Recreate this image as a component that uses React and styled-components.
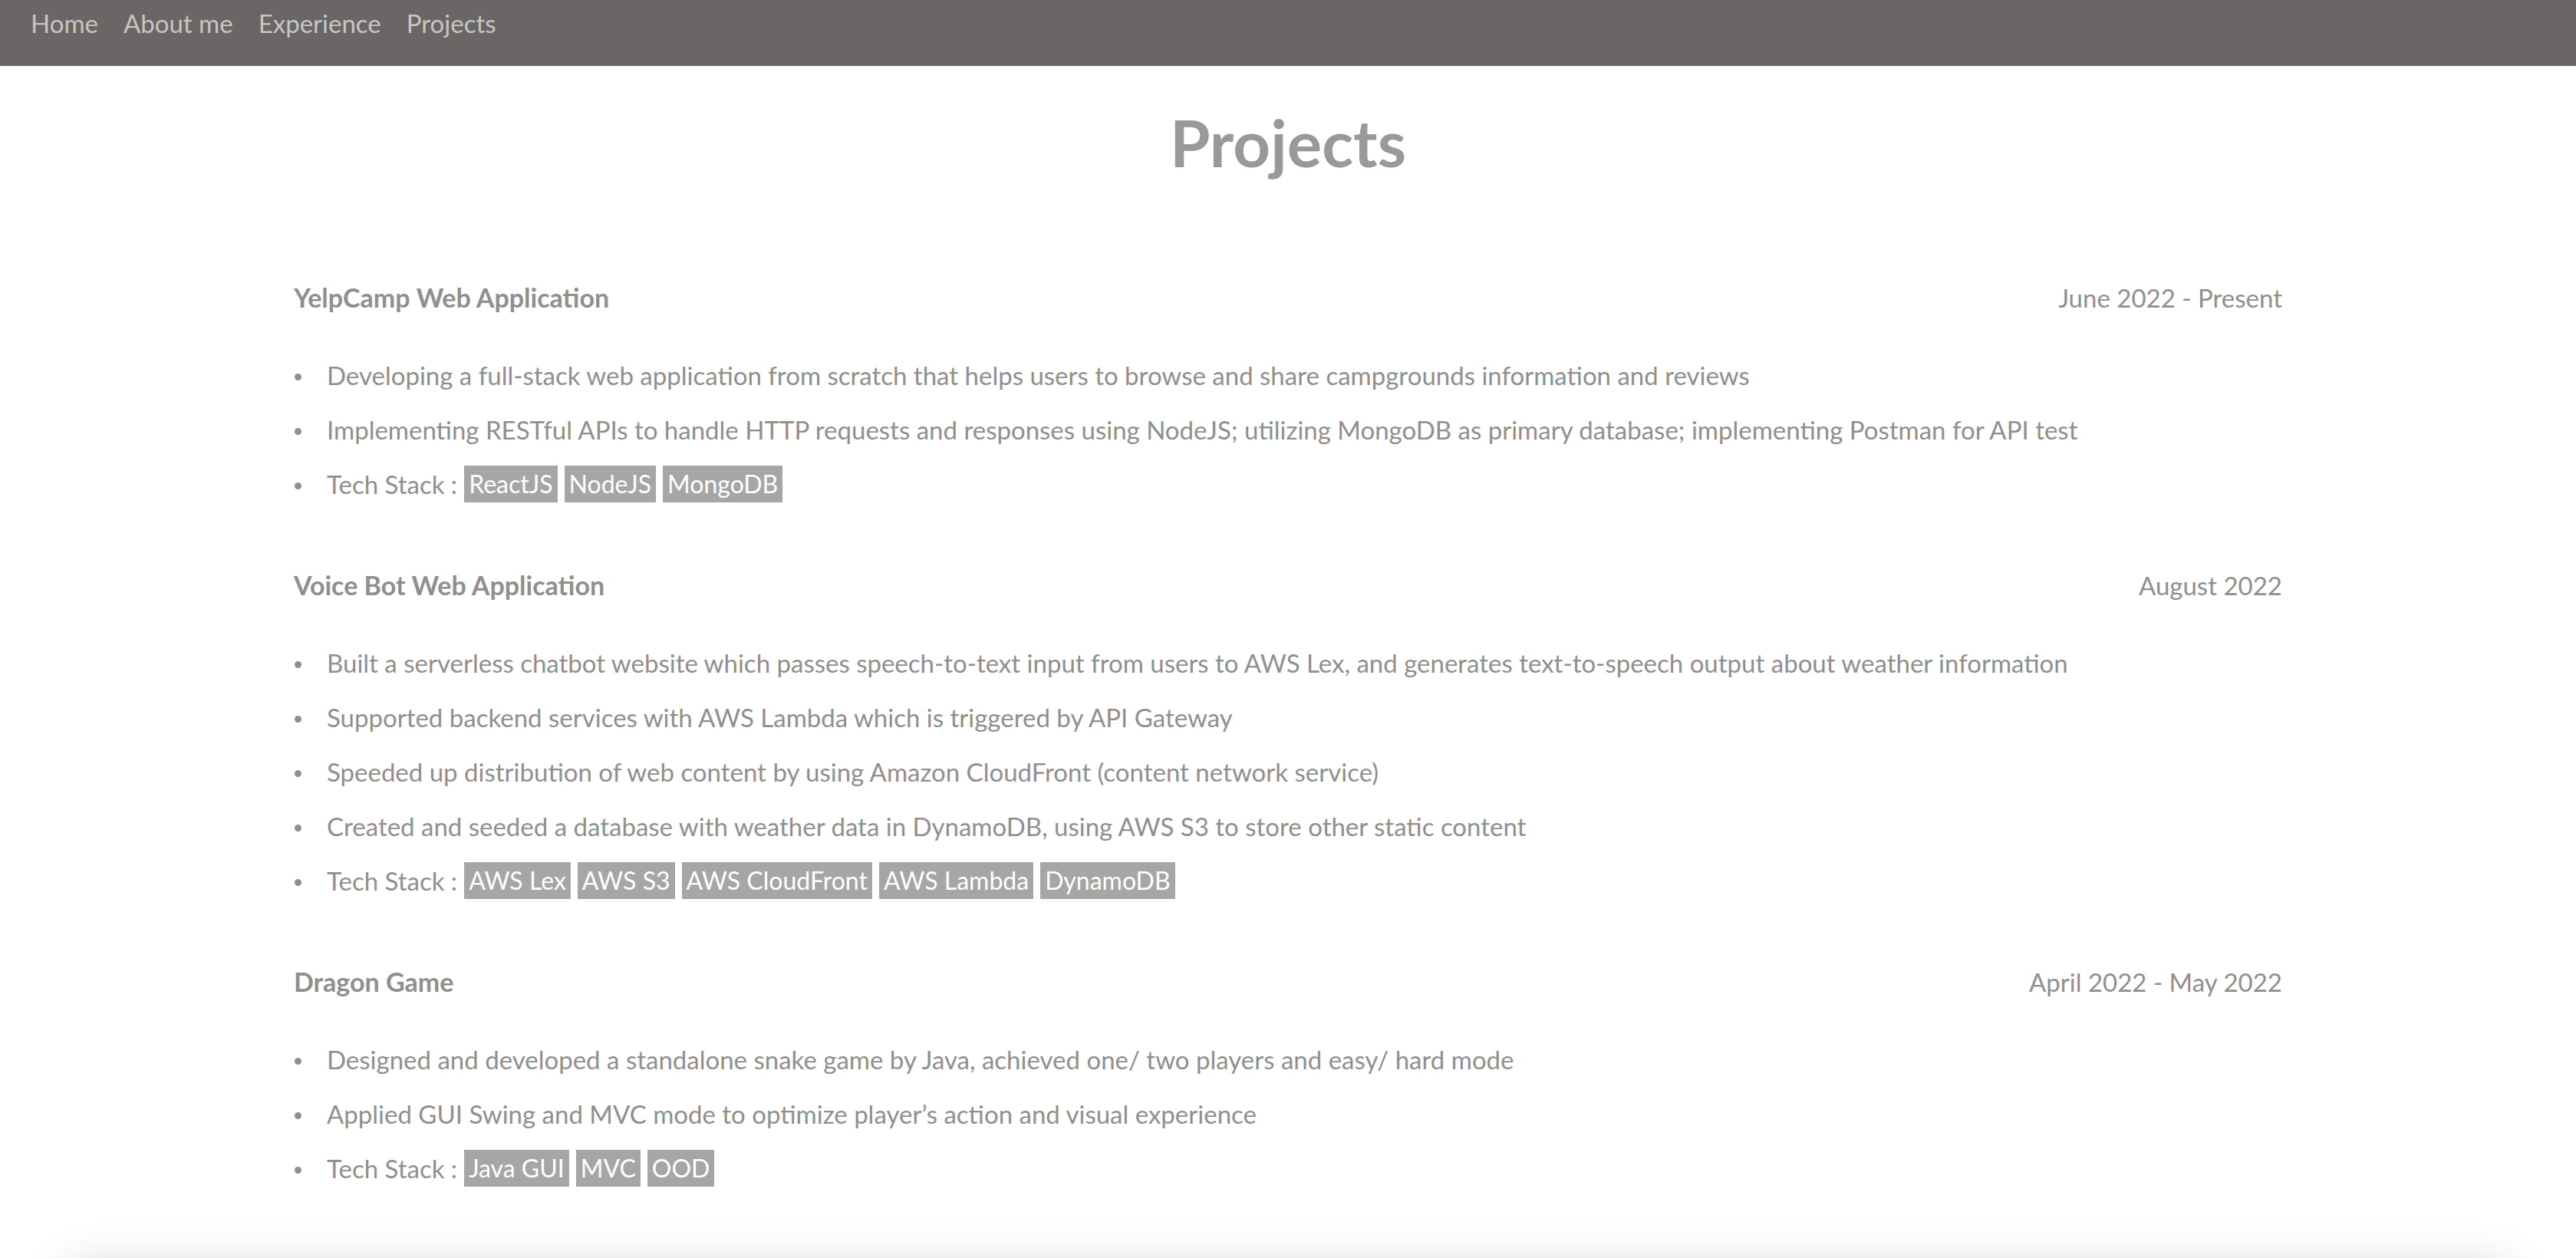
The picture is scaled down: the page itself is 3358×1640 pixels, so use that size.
import React from "react";
import styled, { createGlobalStyle } from "styled-components";

const Global = createGlobalStyle`
  html, body { margin: 0; padding: 0; background: #ffffff; }
  body { font-family: Lato, "Open Sans", sans-serif; }
  * { box-sizing: border-box; }
`;

const NavBar = styled.nav`
  height: 86px;
  background: #6b6666;
  display: flex;
  align-items: flex-start;
  gap: 33px;
  padding: 10px 0 0 40px;
`;

const NavLink = styled.a`
  font-size: 33px;
  line-height: 40px;
  color: #c8c4c4;
  text-decoration: none;
`;

const Title = styled.h1`
  margin: 51px 0 0;
  text-align: center;
  font-size: 85px;
  line-height: 96px;
  font-weight: 700;
  color: #999999;
`;

const Content = styled.main`
  width: 2592px;
  margin: 131px auto 0;
  display: flex;
  flex-direction: column;
  gap: 84px;
`;

const Project = styled.section`
  display: flex;
  flex-direction: column;
  gap: 53px;
`;

const Header = styled.div`
  display: flex;
  justify-content: space-between;
  align-items: center;
  font-size: 33px;
  line-height: 48px;
  color: #8f8f8f;
`;

const Name = styled.span`
  font-weight: 700;
  font-size: 34px;
`;

const Dates = styled.span``;

const Bullets = styled.ul`
  margin: 0;
  padding: 0;
  list-style: none;
  display: flex;
  flex-direction: column;
  gap: 23px;
`;

const Item = styled.li`
  font-size: 33px;
  line-height: 48px;
  color: #8f8f8f;
  &::before {
    content: "";
    display: inline-block;
    width: 9px;
    height: 9px;
    border-radius: 50%;
    background: #8f8f8f;
    margin: 0 33px 0 1px;
    vertical-align: middle;
    position: relative;
    top: -2px;
  }
`;

const Tag = styled.span`
  display: inline-block;
  height: 48px;
  line-height: 48px;
  padding: 0 6px;
  margin-left: 9px;
  font-size: 32px;
  background: #a6a6a6;
  color: #ffffff;
  vertical-align: top;
`;

const NextCard = styled.div`
  margin: 110px 92px 0;
  height: 400px;
  background: #ffffff;
  box-shadow: 0 0 60px rgba(0, 0, 0, 0.22);
`;

const projects = [
  {
    name: "YelpCamp Web Application",
    date: "June 2022 - Present",
    points: [
      "Developing a full-stack web application from scratch that helps users to browse and share campgrounds information and reviews",
      "Implementing RESTful APIs to handle HTTP requests and responses using NodeJS; utilizing MongoDB as primary database; implementing Postman for API test",
    ],
    stack: ["ReactJS", "NodeJS", "MongoDB"],
  },
  {
    name: "Voice Bot Web Application",
    date: "August 2022",
    points: [
      "Built a serverless chatbot website which passes speech-to-text input from users to AWS Lex, and generates text-to-speech output about weather information",
      "Supported backend services with AWS Lambda which is triggered by API Gateway",
      "Speeded up distribution of web content by using Amazon CloudFront (content network service)",
      "Created and seeded a database with weather data in DynamoDB, using AWS S3 to store other static content",
    ],
    stack: ["AWS Lex", "AWS S3", "AWS CloudFront", "AWS Lambda", "DynamoDB"],
  },
  {
    name: "Dragon Game",
    date: "April 2022 - May 2022",
    points: [
      "Designed and developed a standalone snake game by Java, achieved one/ two players and easy/ hard mode",
      "Applied GUI Swing and MVC mode to optimize player\u2019s action and visual experience",
    ],
    stack: ["Java GUI", "MVC", "OOD"],
  },
];

export default function App() {
  return (
    <>
      <Global />
      <NavBar>
        <NavLink href="#home">Home</NavLink>
        <NavLink href="#about">About me</NavLink>
        <NavLink href="#experience">Experience</NavLink>
        <NavLink href="#projects">Projects</NavLink>
      </NavBar>
      <Title>Projects</Title>
      <Content>
        {projects.map((p) => (
          <Project key={p.name}>
            <Header>
              <Name>{p.name}</Name>
              <Dates>{p.date}</Dates>
            </Header>
            <Bullets>
              {p.points.map((t) => (
                <Item key={t}>{t}</Item>
              ))}
              <Item>
                Tech Stack :
                {p.stack.map((s) => (
                  <Tag key={s}>{s}</Tag>
                ))}
              </Item>
            </Bullets>
          </Project>
        ))}
      </Content>
      <NextCard />
    </>
  );
}
